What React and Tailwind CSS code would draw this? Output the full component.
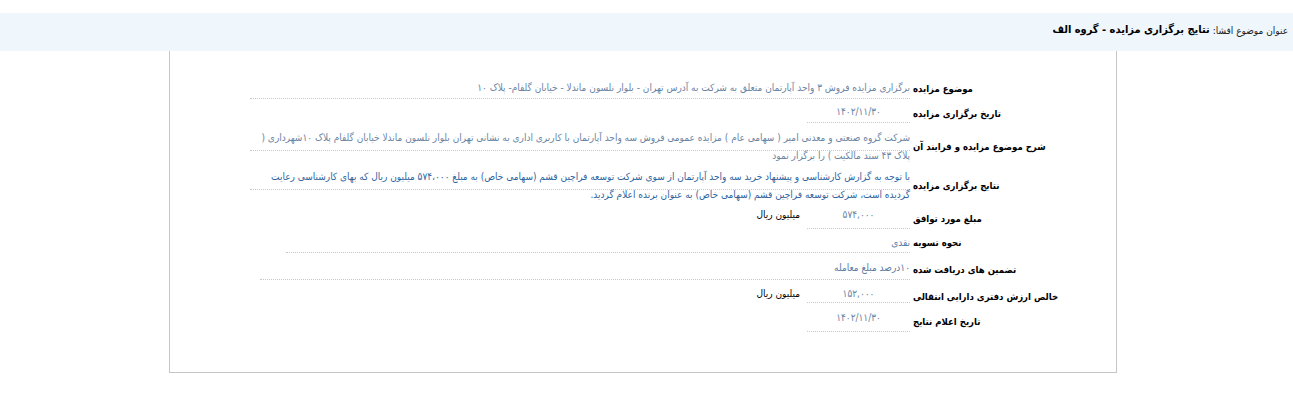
import React from "react";

const F = { fontFamily: "'DejaVu Sans Condensed', 'DejaVu Sans', sans-serif" };

function Label({ children, cls }) {
  return (
    <div className={"w-[203px] shrink-0 whitespace-nowrap text-left font-bold text-[9.5px] leading-[18px] text-black " + cls}>
      {children}
    </div>
  );
}

const V = "text-[10px] leading-[18px] whitespace-nowrap";

export default function App() {
  return (
    <div className="w-[1293px] h-[419px] bg-white overflow-hidden" style={F}>
      <div dir="rtl" className="mt-[13px] h-[38px] bg-[#eff7fd] flex items-center pr-[5px] pb-[3px]">
        <span className="text-[10px] text-[#222]">عنوان موضوع افشا:</span>
        <span className="mr-[3px] text-[11px] font-bold text-black">نتایج برگزاری مزایده - گروه الف</span>
      </div>

      <div dir="rtl" className="ml-[169px] w-[948px] h-[322px] border-x border-b border-[#c6c6c6] pt-[24px]">
        {/* Row 1 */}
        <div className="flex h-[24px]">
          <Label cls="pt-[5px]">موضوع مزایده</Label>
          <div className={"mr-[3px] w-[660px] h-full border-b border-dotted border-[#c8c8c8] pt-[4px] text-[#6b84a3] " + V}>
            برگزاری مزایده فروش ۳ واحد آپارتمان متعلق به شرکت به آدرس تهران - بلوار نلسون ماندلا - خیابان گلفام- پلاک ۱۰
          </div>
        </div>
        {/* Row 2 */}
        <div className="flex h-[24px]">
          <Label cls="pt-[6px]">تاریخ برگزاری مزایده</Label>
          <div className={"mr-[3px] w-[103px] h-full border-b border-dotted border-[#c8c8c8] pt-[4px] text-center text-[#6b84a3] " + V}>
            ۱۴۰۲/۱۱/۳۰
          </div>
        </div>
        {/* Row 3 */}
        <div className="flex h-[28px]">
          <Label cls="pt-[15px]">شرح موضوع مزایده و فرایند آن</Label>
          <div className={"mr-[3px] w-[660px] h-full border-b border-dotted border-[#c8c8c8] pt-[6px] text-[#6b84a3] " + V}>
            <div>شرکت گروه صنعتی و معدنی امیر ( سهامی عام ) مزایده عمومی فروش سه واحد آپارتمان با کاربری اداری به نشانی تهران بلوار نلسون ماندلا خیابان گلفام پلاک ۱۰شهرداری (</div>
            <div>پلاک ۴۳ سند مالکیت ) را برگزار نمود</div>
          </div>
        </div>
        {/* Row 4 */}
        <div className="flex h-[39px]">
          <Label cls="pt-[26px]">نتایج برگزاری مزایده</Label>
          <div className={"mr-[3px] w-[660px] h-full border-b border-dotted border-[#c8c8c8] pt-[17px] text-[#2f64a0] " + V}>
            <div>با توجه به گزارش کارشناسی و پیشنهاد خرید سه واحد آپارتمان از سوی شرکت توسعه فراچین قشم (سهامی خاص) به مبلغ ۵۷۴،۰۰۰ میلیون ریال که بهای کارشناسی رعایت</div>
            <div>گردیده است، شرکت توسعه فراچین قشم (سهامی خاص) به عنوان برنده اعلام گردید.</div>
          </div>
        </div>
        {/* Row 5 */}
        <div className="flex h-[39px]">
          <Label cls="pt-[20px]">مبلغ مورد توافق</Label>
          <div className={"mr-[3px] w-[103px] h-full border-b border-dotted border-[#c8c8c8] pt-[16px] text-center text-[#6b84a3] " + V}>
            ۵۷۴,۰۰۰
          </div>
          <div className={"mr-[7px] pt-[16px] text-black " + V}>میلیون ریال</div>
        </div>
        {/* Row 6 */}
        <div className="flex h-[24px]">
          <Label cls="pt-[5px]">نحوه تسویه</Label>
          <div className={"mr-[3px] w-[624px] h-full border-b border-dotted border-[#c8c8c8] pt-[5px] text-[#5a7ba3] " + V}>
            نقدی
          </div>
        </div>
        {/* Row 7 */}
        <div className="flex h-[27px]">
          <Label cls="pt-[8px]">تضمین های دریافت شده</Label>
          <div className={"mr-[3px] w-[650px] h-full border-b border-dotted border-[#c8c8c8] pt-[6px] text-[#5a7ba3] " + V}>
            ۱۰درصد مبلغ معامله
          </div>
        </div>
        {/* Row 8 */}
        <div className="flex h-[23px]">
          <Label cls="pt-[8px]">خالص ارزش دفتری دارایی انتقالی</Label>
          <div className={"mr-[3px] w-[103px] h-full border-b border-dotted border-[#c8c8c8] pt-[5px] text-center text-[#6b84a3] " + V}>
            ۱۵۲,۰۰۰
          </div>
          <div className={"mr-[7px] pt-[5px] text-black " + V}>میلیون ریال</div>
        </div>
        {/* Row 9 */}
        <div className="flex h-[29px]">
          <Label cls="pt-[10px]">تاریخ اعلام نتایج</Label>
          <div className={"mr-[3px] w-[103px] h-full border-b border-dotted border-[#c8c8c8] pt-[6px] text-center text-[#6b84a3] " + V}>
            ۱۴۰۲/۱۱/۳۰
          </div>
        </div>
      </div>
    </div>
  );
}
